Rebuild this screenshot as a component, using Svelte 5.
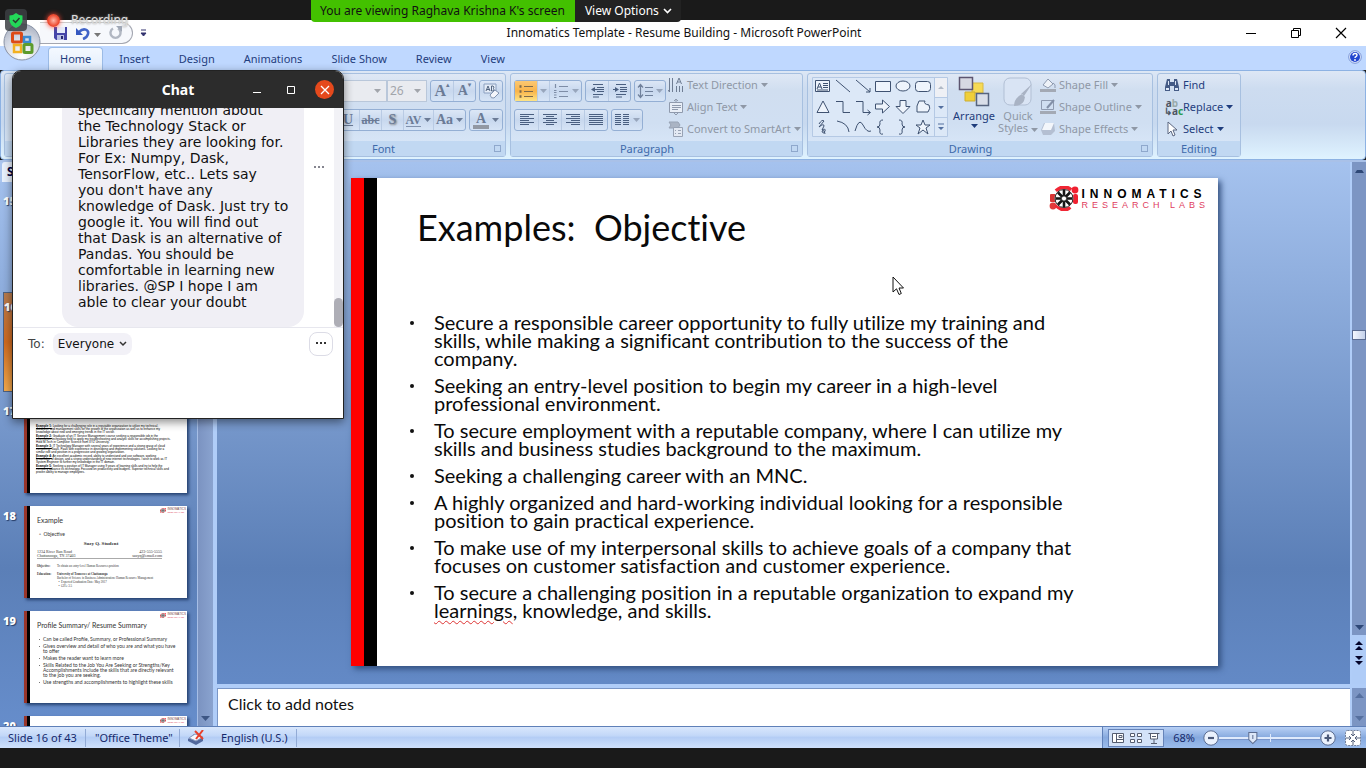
<script>
  const tabs = ['Home', 'Insert', 'Design', 'Animations', 'Slide Show', 'Review', 'View'];
  const bullets = [
    ['Secure a responsible career opportunity to fully utilize my training and', 'skills, while making a significant contribution to the success of the', 'company.'],
    ['Seeking an entry-level position to begin my career in a high-level', 'professional environment.'],
    ['To secure employment with a reputable company, where I can utilize my', 'skills and business studies background to the maximum.'],
    ['Seeking a challenging career with an MNC.'],
    ['A highly organized and hard-working individual looking for a responsible', 'position to gain practical experience.'],
    ['To make use of my interpersonal skills to achieve goals of a company that', 'focuses on customer satisfaction and customer experience.']
  ];
  const message = ['specifically mention about', 'the Technology Stack or', 'Libraries they are looking for.', 'For Ex: Numpy, Dask,', 'TensorFlow, etc.. Lets say', "you don't have any", 'knowledge of Dask. Just try to', 'google it. You will find out', 'that Dask is an alternative of', 'Pandas. You should be', 'comfortable in learning new', 'libraries. @SP I hope I am', 'able to clear your doubt'];
  const examples = [
    ['Example 1:', 'Looking for a challenging role in a reputable organization to utilize my technical, database, and management skills for the growth of the organization as well as to enhance my knowledge about new and emerging trends in the IT sector.'],
    ['Example 2:', 'Graduate of an IT Service Management course seeking a responsible job in the information technology field to apply my troubleshooting and analytic skills for accomplishing projects. Hold M.Tech in Computer Science from XYZ University.'],
    ['Example 3:', 'IT Technology Manager with several years of experience and a strong grasp of cloud computing, SaaS, PaaS with experience in developing and implementing solutions. Looking for a similar role and position in a progressive and growing organization.'],
    ['Example 4:', 'An excellent academic record, ability to understand and use software, working knowledge of design, and a strong understanding of new internet technologies. I wish to work as IT System Engineer to further my knowledge in the IT domain.'],
    ['Example 5:', 'Seeking a position of IT Manager using 9 years of learning skills and try to help the company advance its technology. Focused on productivity and budgets. Superior technical skills and proven ability to manage employees.']
  ];
</script>

{#snippet logo(small)}
  <div class="logo" class:small>
    <svg viewBox="0 0 30 25" aria-hidden="true">
      <rect x="1" y="8" width="6" height="8" rx="1" fill="#d93636" />
      <circle cx="4" cy="20" r="3.4" fill="#e23a3a" />
      <path d="M7 5Q15-2 22 4M7 19Q15 27 21 21" stroke="#f02735" stroke-width="4" fill="none" />
      <circle cx="26" cy="4" r="3.4" fill="#f02030" />
      <rect x="24" y="8" width="5" height="10" rx="2" fill="#f02030" />
      <circle cx="15" cy="12.500" r="9.500" fill="#fff" />
      <g stroke="#151515" stroke-width="2.600"><path d="M15 4v17M6.500 12.500h17M9 6.500l12 12M21 6.500l-12 12" /></g>
      <circle cx="15" cy="12.500" r="9" fill="none" stroke="#222" stroke-width="1" />
      <circle cx="15" cy="12.500" r="2.600" fill="#fff" stroke="#333" />
    </svg>
    <div class="logotext"><b>INNOMATICS</b><span>RESEARCH LABS</span></div>
  </div>
{/snippet}

{#snippet arrow()}<svg class="arr" viewBox="0 0 7 4" aria-hidden="true"><path d="M0 0h7L3.500 4z" fill="currentColor" /></svg>{/snippet}

{#snippet lines(kind)}
  <svg width="16" height="16" viewBox="0 0 16 16" aria-hidden="true" fill="none" stroke="#4a5f80" stroke-width="1.200">
    {#if kind === 'left'}<path d="M1 2.500h14M1 4.500h9M1 6.500h14M1 8.500h9M1 10.500h14M1 12.500h9" />
    {:else if kind === 'center'}<path d="M1 2.500h14M4 4.500h8M1 6.500h14M4 8.500h8M1 10.500h14M4 12.500h8" />
    {:else if kind === 'right'}<path d="M1 2.500h14M6 4.500h9M1 6.500h14M6 8.500h9M1 10.500h14M6 12.500h9" />
    {:else if kind === 'full'}<path d="M1 2.500h14M1 4.500h14M1 6.500h14M1 8.500h14M1 10.500h14M1 12.500h14" />
    {:else if kind === 'cols'}<path d="M1 2.500h6M1 4.500h6M1 6.500h6M1 8.500h6M1 10.500h6M1 12.500h6M9 2.500h6M9 4.500h6M9 6.500h6M9 8.500h6M9 10.500h6M9 12.500h6" />
    {:else if kind === 'bul'}<path d="M6 3.500h9M6 8.500h9M6 13.500h9" stroke="#7d6a4c" /><path d="M1.500 3.500h2M1.500 8.500h2M1.500 13.500h2" stroke-width="2.500" stroke="#7d6a4c" />
    {:else if kind === 'num'}<path d="M6 3.500h9M6 8.500h9M6 13.500h9M2.500 1v4M1 7.500h2.500M1 9.500h2.500M1 12h2.500M1 14.500h2.500" stroke="#7e8da6" />
    {:else if kind === 'out'}<path d="M4 1.500h10M8 4.500h7M8 6.500h7M8 8.500h7M4 11.500h10M4 14h6" /><path d="M6 4v2h2v1H6v2L2 6.500z" fill="#4a5f80" stroke="none" />
    {:else if kind === 'in'}<path d="M4 1.500h10M8 4.500h7M8 6.500h7M8 8.500h7M4 11.500h10M4 14h6" /><path d="M3 4v2H1v1h2v2l4-2.500z" fill="#4a5f80" stroke="none" />
    {:else}<path d="M8 4.500h8M8 8.500h8M8 12.500h8M3.500 2v12M1 4.500l2.500-3 2.500 3M1 11.500l2.500 3 2.500-3" stroke="#70819c" />{/if}
  </svg>
{/snippet}

<div class="screen">
  <div class="black"></div>

  <header class="titlebar">
    <div class="quick">
      <button aria-label="Save"><svg width="15" height="15" viewBox="0 0 15 15"><path d="M1 1h13v13H3l-2-2z" fill="#4545a8" /><path d="M4 1h8v6H4z" fill="#e6ecfb" /><path d="M4 9h7v5H4z" fill="#b9c0e4" /><path d="M8 10h2v3H8z" fill="#26266e" /></svg></button>
      <button aria-label="Undo"><svg width="14" height="13" viewBox="0 0 14 13"><path d="M3 5c5-5 10-2 9 2-.5 2-2 4-5 5" stroke="#4164c8" stroke-width="2.600" fill="none" /><path d="M0 1v7h7z" fill="#3558c0" /></svg></button>
      <span class="qa">{@render arrow()}</span>
      <button aria-label="Repeat"><svg width="14" height="14" viewBox="0 0 14 14"><path d="M9 2.500a5 5 0 1 1-5 0" stroke="#b1b7c2" stroke-width="2.400" fill="none" /><path d="M7 0h6v6z" fill="#9fa7b5" /></svg></button>
    </div>
    <button class="qmore" aria-label="Customize"><svg width="7" height="8" viewBox="0 0 7 8"><path d="M1 1h5M1 4h5L3.500 7z" stroke="#33336f" fill="#33336f" /></svg></button>
    <div class="title">Innomatics Template - Resume Building - Microsoft PowerPoint</div>
    <div class="winbtns">
      <button aria-label="Minimize"><svg width="12" height="12" viewBox="0 0 12 12"><path d="M1 6.500h10" stroke="#000" /></svg></button>
      <button aria-label="Restore"><svg width="12" height="12" viewBox="0 0 12 12" fill="none" stroke="#000"><path d="M1.500 3.500h7v7h-7zM3.500 3.500v-2h7v7h-2" /></svg></button>
      <button aria-label="Close"><svg width="12" height="12" viewBox="0 0 12 12"><path d="M1 1l10 10M11 1L1 11" stroke="#000" stroke-width="1.200" /></svg></button>
    </div>
  </header>

  <nav class="tabs">
    {#each tabs as t, i}<button class:active={i === 0}>{t}</button>{/each}
    <button class="help" aria-label="Help"><svg width="14" height="14" viewBox="0 0 14 14"><circle cx="7" cy="7" r="6.300" fill="#e8f0ff" stroke="#7a94d4" /><circle cx="7" cy="7" r="5" fill="#2447cf" /><path d="M5 5.500q0-2 2-2t2 1.600q0 1-1 1.500t-1 1.400" stroke="#fff" stroke-width="1.400" fill="none" /><circle cx="7" cy="10" r=".9" fill="#fff" /></svg></button>
  </nav>

  <section class="ribbon">
    <div class="group blank"><div class="foot"></div></div>
    <div class="group font">
      <div class="rows end">
        <div class="row">
          <div class="combo face">{@render arrow()}</div><div class="combo size">26 {@render arrow()}</div>
          <div class="set gap"><button class="serif big">A<sup>▴</sup></button><button class="serif">A<sup>▾</sup></button></div>
          <div class="set gap"><button aria-label="Clear Formatting"><svg width="18" height="18" viewBox="0 0 18 18"><path d="M2 2h12v9H2z" fill="#e3ebf7" stroke="#8ba0c0" /><path d="M4 9l2-5 2 5M5 7.500h3M9.500 4v5h2q1-1 0-2.500 1-1.500-.5-2.500z" stroke="#52647f" fill="none" /><path d="M8 13l5-5 4 3-5 5q-3 1-4-3z" fill="#f4f6fb" stroke="#8193b0" /></svg></button></div>
        </div>
        <div class="row">
          <div class="set"><button class="serif und">U</button><button class="serif strike">abc</button><button class="serif shade">S</button><button class="serif av"><span>AV</span>{@render arrow()}</button><button class="serif wide">Aa{@render arrow()}</button></div>
          <div class="set gap"><button class="serif wide"><span class="acol">A</span>{@render arrow()}</button></div>
        </div>
      </div>
      <div class="foot"><span>Font</span><i class="launch"></i></div>
    </div>

    <div class="group para">
      <div class="cols">
        <div class="rows">
          <div class="row">
            <div class="set"><button class="hot" aria-label="Bullets">{@render lines('bul')}</button><button class="tiny" aria-label="Bullet styles">{@render arrow()}</button><button class="wide" aria-label="Numbering">{@render lines('num')}{@render arrow()}</button></div>
            <div class="set gap"><button aria-label="Decrease indent">{@render lines('out')}</button><button aria-label="Increase indent">{@render lines('in')}</button></div>
            <div class="set gap"><button class="spc" aria-label="Line spacing">{@render lines('sp')}{@render arrow()}</button></div>
          </div>
          <div class="row">
            <div class="set four"><button aria-label="Left">{@render lines('left')}</button><button aria-label="Center">{@render lines('center')}</button><button aria-label="Right">{@render lines('right')}</button><button aria-label="Justify">{@render lines('full')}</button></div>
            <div class="set gap"><button class="spc" aria-label="Columns">{@render lines('cols')}{@render arrow()}</button></div>
          </div>
        </div>
        <div class="cmds dim">
          <button><svg width="16" height="16" viewBox="0 0 16 16" stroke="#6f7d93" fill="none"><path d="M1.500 1v14M4.500 1v14M8.500 9v6M11.500 9v6M14.500 9v6M0 13l1.500 2M8.500 7l2.500-6 2.500 6M9.500 5h3" /></svg>Text Direction {@render arrow()}</button>
          <button><svg width="16" height="16" viewBox="0 0 16 16" stroke="#8f9aad" fill="none"><path d="M1.500 3.500h13v10h-13z" fill="#e8eef7" /><path d="M4 6.500h9M4 8.500h9M4 10.500h6M8 0v4M6 2l2-2 2 2M6 14l2 2 2-2" /></svg>Align Text {@render arrow()}</button>
          <button><svg width="16" height="16" viewBox="0 0 16 16" stroke="#98a3b5"><path d="M1 1h9l2 3-2 3H1l2-3z" fill="#aab4c4" /><path d="M5.500 6.500h9v9h-9z" fill="#e3e9f3" /><path d="M7 9.500h1M10 9.500h3M7 12.500h1M10 12.500h3" /></svg>Convert to SmartArt {@render arrow()}</button>
        </div>
      </div>
      <div class="foot"><span>Paragraph</span><i class="launch"></i></div>
    </div>

    <div class="group draw">
      <div class="cols">
        <svg class="gallery" width="136" height="60" viewBox="0 0 136 60" fill="#eef4fc" stroke="#3f5271" aria-label="Shapes">
          <path d="M.500.500h135v59H.500z" fill="#dce8f7" stroke="#b5c9e4" />
          <path d="M3.500 3.500h14v11h-14z" /><path d="M5 12l2.500-6L10 12M6 10h3M11 6.500h5M11 8.500h5M11 10.500h5M5 13h11" fill="none" />
          <path d="M24 3l14 12M44 3l14 12M58 11v4h-4" fill="none" />
          <path d="M63.500 4.500h15v10h-15z" /><ellipse cx="91" cy="9" rx="7" ry="5" /><rect x="103.500" y="4.500" width="15" height="10" rx="3" />
          <path d="M5 35.500h12L11 24z" /><path d="M24 24.500h7v11h7M44 24.500h7v11h7M55.500 33l3 2.500-3 2.500" fill="none" />
          <path d="M63.500 27h7v-4l7 6.500-7 6.500v-4h-7zM88 23.500h6v6h4l-7 7-7-7h4zM105 29l2-5h6q-2 3 4 4 2 3-1 7h-11z" />
          <g fill="none"><path d="M7 47q3-5 5-3l-5 6q5-4 5-1l-2 4q4-2 3 1-2 4-3 0 2-2 3 3M25 44q11 2 12 11M43 54q4-14 8-6t8 6M71 43q-4 0-3 4 0 3-3 3 3 0 3 3-1 5 3 4M87 43q4 0 3 4 0 3 3 3-3 0-3 3 1 5-3 4" /></g>
          <path d="M111 43l2 5h5l-4 3 2 6-5-4-5 4 2-6-4-3h5z" />
          <path d="M122.500 1v58M122.500 20.500h13M122.500 40.500h13" stroke="#b5c9e4" /><path d="M123 1h12v19h-12z" fill="#eef0f5" stroke="none" />
          <path d="M126 12h6l-3-3z" fill="#b0b9c6" stroke="none" /><path d="M126 29h6l-3 3zM126 50h6l-3 3zM126 46.500h6v1h-6z" fill="#5470a0" stroke="none" />
        </svg>
        <button class="bigbtn"><svg width="32" height="32" viewBox="0 0 32 32"><path d="M14 7h11v10H14z" fill="#f6da55" stroke="#d8b942" /><path d="M7 16h10v9H7z" fill="#f0cf39" stroke="#cdae32" /><path d="M1.500 1.500h13v12h-13z" fill="#d7d8e2" stroke="#5c5570" stroke-width="1.500" /><path d="M18.500 17.500h12v12h-12z" fill="#d9dee9" stroke="#56647f" stroke-width="1.500" /></svg><span>Arrange</span>{@render arrow()}</button>
        <button class="bigbtn dim"><svg width="32" height="32" viewBox="0 0 32 32"><rect x="2" y="2" width="27" height="27" rx="6" fill="#d9e4f4" stroke="#b1bfd4" /><path d="M30 8l-8 12-3-2zM20 18q-8 4-8 12 10 0 11-9z" fill="#a9b3c4" /></svg><span>Quick<br />Styles {@render arrow()}</span></button>
        <div class="cmds dim">
          <button><svg width="16" height="16" viewBox="0 0 16 16"><path d="M3 8l5-6 5 5-5 4z" fill="#eef2f8" stroke="#8f9bb0" /><path d="M13 6q3 1 2 5" stroke="#8f9bb0" fill="none" /><path d="M0 12h16v3H0z" fill="#a3a9b4" /></svg>Shape Fill {@render arrow()}</button>
          <button><svg width="16" height="16" viewBox="0 0 16 16"><path d="M1.500 1.500h12v9h-12z" fill="none" stroke="#8f9bb0" /><path d="M7 9l7-8" stroke="#8390a8" stroke-width="2" /><path d="M0 12h16v3H0z" fill="#a3a9b4" /></svg>Shape Outline {@render arrow()}</button>
          <button><svg width="16" height="16" viewBox="0 0 16 16"><path d="M4 2h10l1 8-4 4H3L1 9z" fill="#b4bfd2" /><path d="M5 2h9l-3 7H2z" fill="#f3f6fb" /></svg>Shape Effects {@render arrow()}</button>
        </div>
      </div>
      <div class="foot"><span>Drawing</span><i class="launch"></i></div>
    </div>

    <div class="group edit">
      <div class="cmds">
        <button><svg width="16" height="16" viewBox="0 0 16 16"><path d="M3 2h3v3h4V2h3l2 8v4h-5V9H6v5H1v-4z" fill="#465c86" /><path d="M2 11h3v2H2zM11 11h3v2h-3zM4 4h1v4H4zM11 4h1v4h-1z" fill="#dfe8f7" /></svg>Find</button>
        <button><span class="abac"><b>a<i>b</i></b><b>↳a<u>c</u></b></span>Replace {@render arrow()}</button>
        <button><svg width="16" height="16" viewBox="0 0 16 16"><path d="M4 1v12l3-3 2 5 2-1-2-5h4z" fill="#fff" stroke="#5b6680" /></svg>Select {@render arrow()}</button>
      </div>
      <div class="foot"><span>Editing</span></div>
    </div>
  </section>

  <main class="work">
    <aside class="pane">
      <div class="panetabs"><span>Slides</span></div>
      <div class="panebody">
        <ol class="thumbs">
          <li><b>15</b><div class="thumb"></div></li>
          <li class="sel"><b>16</b><div class="thumb"></div></li>
          <li><b>17</b><div class="thumb ex"><div>{#each examples as e}<p><u>{e[0]}</u> {e[1]}</p>{/each}</div></div></li>
          <li><b>18</b><div class="thumb resume">{@render logo(true)}
            <h4>Example</h4><p class="ob">◦ &nbsp;Objective</p>
            <h5>Suzy Q. Student</h5>
            <div class="addr"><span>1234 River Run Road<br />Chattanooga, TN 37403</span><span>423-555-5555<br />suzyq@email.com</span></div>
            <dl><dt>Objective:</dt><dd>To obtain an entry-level Human Resources position</dd><dt>Education:</dt><dd><b>University of Tennessee at Chattanooga</b><br />Bachelor of Science in Business Administration: Human Resource Management<br />&nbsp; • &nbsp;Expected Graduation Date: May 2017<br />&nbsp; • &nbsp;GPA: 3.5</dd></dl>
          </div></li>
          <li><b>19</b><div class="thumb profile">{@render logo(true)}
            <h4>Profile Summary/ Resume Summary</h4>
            <ul><li>Can be called Profile, Summary, or Professional Summary</li><li>Gives overview and detail of who you are and what you have to offer</li><li>Makes the reader want to learn more</li><li>Skills Related to the Job You Are Seeking or Strengths/Key Accomplishments include the skills that are directly relevant to the job you are seeking.</li><li>Use strengths and accomplishments to highlight these skills</li></ul>
          </div></li>
          <li><b>20</b><div class="thumb">{@render logo(true)}</div></li>
        </ol>
        <div class="bar"><svg width="9" height="5" viewBox="0 0 9 5" aria-hidden="true"><path d="M0 0h9L4.500 5z" fill="#3d5684" /></svg></div>
      </div>
    </aside>
    <div class="right">
      <div class="stage">
        <div class="canvas">
          <article class="slide">
            <div class="head"><h1>Examples:&nbsp; Objective</h1>{@render logo(false)}</div>
            <ul class="bul">
              {#each bullets as b}<li>{#each b as l}<span>{l}</span>{/each}</li>{/each}
              <li><span>To secure a challenging position in a reputable organization to expand my</span><span><em>learnings</em>, knowledge, and skills.</span></li>
            </ul>
          </article>
        </div>
        <div class="vscroll">
          <div class="track">
            <svg width="9" height="4" viewBox="0 0 9 4"><path d="M0 4h9L7 1H2z" fill="#2e4877" /></svg>
            <i></i>
            <svg width="9" height="5" viewBox="0 0 9 5"><path d="M0 0h9L4.500 5z" fill="#2e4877" /></svg>
          </div>
          <div class="jump"><svg width="8" height="10" viewBox="0 0 8 10"><path d="M0 4h8L4 0zM0 9h8L4 5z" fill="#05052a" /></svg><svg width="8" height="10" viewBox="0 0 8 10"><path d="M0 0h8L4 4zM0 5h8L4 9z" fill="#05052a" /></svg></div>
        </div>
      </div>
      <div class="notes"><p>Click to add notes</p><div class="nbar"><svg width="9" height="5" viewBox="0 0 9 5"><path d="M0 5h9L4.500 0z" fill="#56709f" /></svg><svg width="9" height="5" viewBox="0 0 9 5"><path d="M0 0h9L4.500 5z" fill="#56709f" /></svg></div></div>
    </div>
  </main>

  <footer class="status">
    <span class="s1">Slide 16 of 43</span><span class="s2">"Office Theme"</span>
    <span class="s3"><svg width="17" height="15" viewBox="0 0 17 15"><path d="M0 9l6-5 9 3v4l-7 4-8-4z" fill="#51689d" /><path d="M1 8l6-4 8 3-7 4z" fill="#f5f7fc" stroke="#8b9cc2" /><path d="M7 1l8 8M15 0L8 9" stroke="#e8402a" stroke-width="2" /></svg></span>
    <span class="s4">English (U.S.)</span>
    <div class="viewctl">
      <div class="views">
        <button aria-label="Normal"><svg width="12" height="12" viewBox="0 0 12 12" fill="#fff" stroke="#555d70"><path d="M.500 1.500h11v9H.500zM4.500 1.500v9M4.500 7.500h7M7 3.500h3v2H7z" /></svg></button>
        <button aria-label="Slide Sorter"><svg width="12" height="12" viewBox="0 0 12 12" fill="#fff" stroke="#555d70"><path d="M.500 1.500h4v3h-4zM7.500 1.500h4v3h-4zM.500 7.500h4v3h-4zM7.500 7.500h4v3h-4z" /></svg></button>
        <button aria-label="Slide Show"><svg width="12" height="12" viewBox="0 0 12 12" fill="#fff" stroke="#555d70"><path d="M.500 1.500h11M2.500 2v5h7V2M6 7v4M3 11.500h6M4 4.500h4" /></svg></button>
      </div>
      <span>68%</span>
      <button class="z" aria-label="Zoom out"><svg width="16" height="16" viewBox="0 0 16 16"><circle cx="8" cy="8" r="7.200" fill="#eaf1fd" stroke="#5b6c90" /><path d="M5 8h6" stroke="#4a5878" stroke-width="2.200" /></svg></button>
      <svg class="zline" viewBox="0 0 100 16" preserveAspectRatio="none"><path d="M0 8h100" stroke="#dfeafc" stroke-width="2" /><path d="M0 9.500h100" stroke="#7a96cb" /><path d="M51 4v8" stroke="#dfeafc" /><path d="M29.500 2.500h8v7l-4 4-4-4z" fill="#dde7f8" stroke="#5b6c90" /><path d="M33.500 5v4" stroke="#5b6c90" /></svg>
      <button class="z" aria-label="Zoom in"><svg width="16" height="16" viewBox="0 0 16 16"><circle cx="8" cy="8" r="7.200" fill="#eaf1fd" stroke="#5b6c90" /><path d="M4.500 8h7M8 4.500v7" stroke="#4a5878" stroke-width="2.200" /></svg></button>
      <button class="z fit" aria-label="Fit"><svg width="16" height="16" viewBox="0 0 16 16"><rect x=".5" y=".5" width="15" height="15" rx="2" fill="#fff" stroke="#74819b" stroke-dasharray="2 1" /><path d="M8 1v5M8 10v5M1 8h5M10 8h5M6 4l2 2 2-2M6 12l2-2 2 2M4 6l2 2-2 2M12 6l-2 2 2 2" stroke="#56627c" fill="none" /></svg></button>
    </div>
  </footer>
  <div class="black"></div>

  <button class="orb" aria-label="Office">
    <svg width="40" height="40" viewBox="0 0 40 40"><defs><radialGradient id="orbg" cx=".5" cy=".9" r=".9"><stop offset="0" stop-color="#fff" /><stop offset=".6" stop-color="#d4d9e4" /><stop offset="1" stop-color="#aab1c0" /></radialGradient></defs><circle cx="20" cy="20" r="18" fill="url(#orbg)" stroke="#8a93a6" /><g fill="none" stroke-width="3"><rect x="10.500" y="11" width="9" height="9" rx="1" stroke="#dd4a16" /><rect x="22" y="15" width="6" height="5" stroke="#3c8ad0" stroke-width="2.500" /><rect x="12" y="23" width="7" height="7" stroke="#f2b021" stroke-width="2.500" /><rect x="22" y="22.500" width="8" height="8" rx="1" stroke="#5d9b2c" /></g></svg>
  </button>
  <div class="shield"><svg width="14" height="15" viewBox="0 0 14 15"><path d="M7 0q3 2.500 6.500 2.500V7q0 5-6.500 8Q.5 12 .5 7V2.500Q4 2.500 7 0z" fill="#23d959" /><path d="M4 7l2.500 2.500L10.500 5" stroke="#2b3b30" stroke-width="1.500" fill="none" /></svg></div>
  <div class="rec"><i></i><span>Recording</span></div>
  <div class="share"><span>You are viewing Raghava Krishna K's screen</span><button>View Options <svg width="9" height="6" viewBox="0 0 9 6"><path d="M1 1l3.500 3.500L8 1" stroke="#fff" stroke-width="1.600" fill="none" /></svg></button></div>

  <svg class="cursor" width="12" height="20" viewBox="0 0 12 20" aria-hidden="true"><path d="M1 1v15l3.500-3.200L7 18.500l2.300-1L7 12h4.500z" fill="#fff" stroke="#111" /></svg>

  <section class="chat">
    <header><h2>Chat</h2><div>
      <button aria-label="Minimize chat"><svg width="10" height="10" viewBox="0 0 10 10"><path d="M1 7.500h8" stroke="#fff" /></svg></button>
      <button aria-label="Maximize chat"><svg width="10" height="10" viewBox="0 0 10 10"><path d="M1.500 1.500h7v7h-7z" stroke="#fff" fill="none" /></svg></button>
      <button class="x" aria-label="Close chat"><svg width="10" height="10" viewBox="0 0 10 10"><path d="M1 1l8 8M9 1L1 9" stroke="#fff" stroke-width="1.300" /></svg></button>
    </div></header>
    <div class="msgs">
      <div class="bubble">{#each message as l}<span>{l}</span>{/each}</div>
      <button class="dots" aria-label="More"><svg width="11" height="3" viewBox="0 0 11 3"><path d="M0 0h2v2H0zM4 0h2v2H4zM8 0h2v2H8z" fill="#85858f" /></svg></button>
      <div class="cbar"><i></i></div>
    </div>
    <div class="to"><span>To:</span><button class="who">Everyone <svg width="8" height="6" viewBox="0 0 8 6"><path d="M1 1l3 3 3-3" stroke="#333" stroke-width="1.500" fill="none" /></svg></button><button class="opt" aria-label="Options"><svg width="11" height="3" viewBox="0 0 11 3"><path d="M0 0h2v2H0zM4 0h2v2H4zM8 0h2v2H8z" fill="#333" /></svg></button></div>
    <textarea aria-label="Message"></textarea>
  </section>
</div>

<style>
  :global(body) { background: #1a1a1a; }
  * { box-sizing: border-box; }
  button { font: inherit; color: inherit; background: none; border: 0; padding: 0; margin: 0; display: flex; align-items: center; justify-content: center; white-space: nowrap; }
  svg { display: block; flex: none; }
  p, h1, h2, h4, h5, ul, ol, dl, dd { margin: 0; padding: 0; }
  .screen { position: relative; display: flex; flex-direction: column; height: 100vh; overflow: hidden; font: 11px/16px "Noto Sans", sans-serif; color: #1e3c7b; }
  .black { height: 20px; flex: none; background: #1a1a1a; }
  .titlebar { display: flex; align-items: center; height: 26px; flex: none; background: #fff; padding-left: 40px; }
  .quick { display: flex; align-items: center; gap: 8px; height: 22px; width: 93px; padding-left: 13px; border: 1px solid #a3a6b0; border-left: 0; border-top-color: #ccc; border-radius: 0 11px 11px 0; background: #f6f8fc; }
  .qa { color: #777; margin: 0 0 0 -4px; }
  .qmore { margin-left: 7px; }
  .title { flex: 1; text-align: center; color: #111; padding: 0 24px 0 0; white-space: nowrap; font-size: 12px; }
  .winbtns { display: flex; padding-right: 19px; gap: 33px; }
  .arr { width: 7px; height: 4px; display: inline-block; }
  .tabs { display: flex; height: 24px; flex: none; background: #bfd8ff; padding: 1px 4px 0 48px; }
  .tabs button { padding: 0 13px; margin-right: 3px; color: #1f3d7d; border-radius: 4px 4px 0 0; height: 23px; }
  .tabs .active { padding: 0 11px; background: linear-gradient(#f4f9ff, #e3edfb); border: 1px solid #9bbbe6; border-bottom: 0; }
  .tabs .help { margin: 0 0 0 auto; padding: 0; height: 20px; }
  .ribbon { display: flex; gap: 4px; height: 90px; flex: none; padding: 2px 4px 2px 3px; border: 1px solid #8db2e3; border-radius: 4px; background: linear-gradient(#dde7f5, #cddcf0 20%, #c8d9ef 60%, #dff3ff); }
  .group { display: flex; flex-direction: column; border: 1px solid #a7c0e0; border-radius: 3px; background: linear-gradient(#dfe8f5, #d0def0 20%, #d0dff2 60%, #dbe9fa); }
  .blank { width: 272px; }
  .font { width: 226px; }
  .para { width: 293px; }
  .draw { width: 346px; }
  .edit { width: 84px; }
  .foot { margin-top: auto; height: 15px; flex: none; display: flex; justify-content: center; align-items: center; background: #c1d8f2; color: #3e6aaa; position: relative; }
  .font .foot, .para .foot, .draw .foot { padding-right: 19px; }
  .launch { position: absolute; right: 4px; top: 4px; width: 7px; height: 7px; border: 1px solid #8fa8cc; }
  .rows { display: flex; flex-direction: column; gap: 7px; padding: 6px 0 0 3px; }
  .rows .row { display: flex; }
  .rows.end .row { justify-content: flex-end; }
  .rows.end { padding-right: 2px; }
  .set { display: flex; height: 22px; border: 1px solid #94afd4; border-radius: 3px; background: linear-gradient(#dce7f6, #c8d8ee 50%, #d6e4f6); }
  .gap { margin-left: 3px; }
  .set button { width: 22px; gap: 3px; color: #98a6bc; }
  .set button + button { border-left: 1px solid #b9cbe4; }
  .set .tiny { width: 12px; }
  .set .wide { width: 32px; }
  .set .spc { width: 30px; }
  .four button { width: 23px; }
  .set .av { width: 30px; }
  .set .av span { font-size: 12px; border-bottom: 1px solid #8091ad; line-height: 12px; }
  .hot { background: linear-gradient(#fbc873, #f9b44a 50%, #fde486); }
  .set .serif { font: bold 14px "Liberation Serif", serif; color: #6b7b96; }
  .serif.big { font-size: 16px; }
  .set button:has(sup) { gap: 0; }
  .serif sup { font: 7px/8px "DejaVu Sans", sans-serif; align-self: flex-start; }
  .und { text-decoration: underline; }
  .strike { text-decoration: line-through; }
  .set .strike { font-size: 12px; }
  .shade { text-shadow: 1px 1px 2px #777; }
  .acol { border-bottom: 4px solid #9298a3; line-height: 13px; padding: 0 3px; }
  .combo { height: 22px; border: 1px solid #b9c7da; background: #e9ebf0; color: #a2a5ab; font-size: 12px; display: flex; align-items: center; justify-content: space-between; padding: 0 5px 0 2px; }
  .face { width: 88px; justify-content: flex-end; }
  .size { width: 40px; }
  .cols { display: flex; }
  .cmds { display: flex; flex-direction: column; color: #1f3d7d; }
  .cmds button { height: 22px; gap: 3px; justify-content: flex-start; }
  .para .cmds { padding-left: 2px; }
  .cmds.dim, .dim { color: #8f98a6; }
  .gallery { margin: 3px 0 0 4px; }
  .bigbtn { flex-direction: column; justify-content: flex-start; width: 44px; padding-top: 2px; line-height: 12px; gap: 2px; margin-left: 4px; }
  .bigbtn.dim { margin: 0; }
  .edit .cmds { padding-left: 6px; }
  .abac { width: 16px; display: flex; flex-direction: column; line-height: 8px; font-size: 10px; color: #4d5563; }
  .abac i { font-style: normal; color: #9aa; }
  .abac u { text-decoration: none; color: #2b9b50; }
  .work { flex: 1; min-height: 0; display: flex; background: linear-gradient(#a5c2ee, #5b7fb7 72%, #668dcb); border-top: 2px solid #a9c1e8; }
  .pane { width: 217px; flex: none; display: flex; flex-direction: column; border-right: 4px solid #b0cdf8; }
  .panetabs { height: 20px; flex: none; background: #a9c4ee; padding-left: 2px; }
  .panetabs span { display: block; width: 60px; height: 20px; padding: 2px 5px; background: #e9f1fd; border-radius: 3px 3px 0 0; color: #000040; font-weight: bold; font-size: 12px; }
  .panebody { flex: 1; min-height: 0; display: flex; }
  .thumbs { flex: 1; overflow: hidden; list-style: none; display: flex; flex-direction: column; gap: 5px; padding: 5px 5px 0 3px; }
  .thumbs > li { flex: none; display: flex; height: 100px; padding: 4px 5px 4px 0; font: bold 11px/20px "Noto Sans", sans-serif; color: #fff; }
  .thumbs > li > b { width: 21px; text-shadow: 1px 1px 1px #263c66; }
  .thumbs .sel { background: linear-gradient(#b57a4e, #cf6a20 50%, #f3a94c); border: 1px solid #4e6282; }
  .thumb { position: relative; flex: 1; min-width: 0; height: 92px; background: #fff; border-left: 3px solid #98352b; box-shadow: inset 3px 0 #000, 2px 2px 3px #25406f; color: #333; overflow: hidden; font: 5px/5px Lato, sans-serif; padding-left: 10px; }
  .ex { padding: 24px 16px 0 9px; color: #000; font: 3px/3px "Liberation Sans", sans-serif; }
  .ex p { margin-bottom: 1px; }
  .ex u { font-weight: bold; }
  .thumb h4 { font: 7px/9px Lato, sans-serif; padding-top: 10px; }
  .ob { padding: 7px 0 3px 2px; }
  .thumb h5 { font: bold 5px/6px "Liberation Serif", serif; text-align: center; padding-right: 22px; margin-top: 1px; }
  .addr { font: 4px/4px "Liberation Serif", serif; display: flex; justify-content: space-between; margin: 3px 25px 5px 0; border-bottom: 1px solid #aaa; }
  .addr span + span { text-align: right; }
  .thumb dl { display: grid; grid-template-columns: 20px 1fr; row-gap: 4px; font: 3px/4px "Liberation Serif", serif; white-space: nowrap; }
  .thumb dt { font-weight: bold; }
  .profile ul { margin-top: 7px; padding: 0 10px 0 6px; list-style: none; }
  .profile li { margin-bottom: 2px; position: relative; }
  .profile li::before { content: ""; position: absolute; left: -4px; top: 2px; width: 1px; height: 1px; background: #777; }
  .bar { width: 16px; background: linear-gradient(90deg, #7b93c1, #8aa3cf); border-left: 1px solid #a6bee6; display: flex; align-items: flex-end; justify-content: center; padding-bottom: 5px; }
  .right { flex: 1; min-width: 0; display: flex; flex-direction: column; }
  .stage { flex: 1; min-height: 0; display: flex; }
  .canvas { flex: 1; display: flex; padding: 16px 132px 18px 134px; }
  .slide { flex: 1; background: #fff; border-left: 13px solid #f00; box-shadow: inset 13px 0 #000, 3px 3px 6px #33507f; color: #0a0a0a; font: 20px/18px Lato, sans-serif; font-variant-ligatures: none; padding: 8px 9px 0 52px; }
  .head { display: flex; justify-content: space-between; }
  .slide h1 { font: 36px/42px Lato, sans-serif; font-variant-ligatures: none; padding: 20px 0 0 1px; white-space: nowrap; }
  .logo { display: flex; gap: 2px; height: 25px; align-items: center; }
  .logo svg { width: 30px; height: 25px; }
  .logotext { display: flex; flex-direction: column; font: 9px/10px "Liberation Sans", sans-serif; color: #e0405e; letter-spacing: 4px; white-space: nowrap; }
  .logotext b { font-size: 12px; line-height: 12px; color: #000; letter-spacing: 5px; }
  .logo.small { position: absolute; right: 1px; top: 2px; height: 5px; gap: 1px; }
  .small svg { width: 6px; height: 5px; }
  .small .logotext { font-size: 2px; line-height: 2px; letter-spacing: 0; }
  .small .logotext b { font-size: 3px; line-height: 3px; font-weight: normal; letter-spacing: 0; color: #744; }
  .bul { list-style: none; display: flex; flex-direction: column; gap: 9px; padding-top: 65px; }
  .bul li { position: relative; padding-left: 18px; }
  .bul li::before { content: ""; position: absolute; left: -6px; top: 8px; width: 4px; height: 4px; border-radius: 2px; background: #111; }
  .bul span { display: block; white-space: nowrap; }
  .bul em { font-style: normal; text-decoration: underline wavy #d33 1px; text-underline-offset: 2px; }
  .vscroll { width: 16px; display: flex; flex-direction: column; border-left: 2px solid #b0cdf8; }
  .track { flex: 1; display: flex; flex-direction: column; align-items: center; justify-content: space-between; background: #7c95c3; padding: 7px 0 5px; position: relative; }
  .track i { position: absolute; top: 168px; left: 0; right: 0; height: 10px; border: 1px solid #5b6c90; background: linear-gradient(90deg, #f4f7fd, #c4d1ea); }
  .jump { height: 49px; background: #afccf7; display: flex; flex-direction: column; align-items: center; padding-top: 6px; gap: 5px; }
  .notes { height: 42px; flex: none; display: flex; border-top: 4px solid #b0cdf8; background: #fff; }
  .notes p { flex: 1; color: #111; font: 16px/20px Lato, sans-serif; padding: 5px 10px; border-top: 1px solid #7a96c6; border-left: 1px solid #7a96c6; }
  .nbar { width: 16px; background: #7c95c3; border-left: 2px solid #b0cdf8; display: flex; flex-direction: column; align-items: center; justify-content: space-between; padding: 5px 0; }
  .status { height: 22px; flex: none; display: flex; align-items: center; background: linear-gradient(#d9e7fc, #c3d8f8 40%, #b4cdf5 50%, #cfe1fc); border-top: 1px solid #5f80b8; color: #15286b; }
  .status > span { height: 18px; display: flex; align-items: center; border-right: 1px solid #92abd6; white-space: nowrap; }
  .s1 { width: 86px; padding-left: 8px; }
  .s2 { width: 94px; padding-left: 9px; }
  .status > .s3 { width: 33px; padding-left: 8px; border: 0; }
  .s4 { width: 84px; padding-left: 8px; }
  .viewctl { margin-left: auto; height: 21px; display: flex; align-items: center; background: linear-gradient(#b8d0f5, #86a9de 50%, #9bbcec); border-left: 1px solid #5f80b8; padding: 0 5px; }
  .views { display: flex; border: 1px solid #6684b9; background: #d3e2f8; margin-right: 9px; }
  .views button { width: 18px; height: 16px; }
  .z { margin-left: 8px; }
  .zline { width: 101px; height: 16px; margin-right: -8px; }
  .fit { margin-left: 9px; }
  .orb { position: absolute; left: 2px; top: 22px; }
  .shield { position: absolute; left: 5px; top: 9px; width: 22px; height: 22px; border-radius: 4px; background: #3c4043d9; display: flex; align-items: center; justify-content: center; }
  .rec { position: absolute; left: 47px; top: 12px; display: flex; align-items: center; gap: 11px; color: #ddd; font-size: 12px; height: 16px; text-shadow: 0 0 2px #999; }
  .rec i { width: 13px; height: 13px; border-radius: 7px; background: radial-gradient(#ffb7a8, #ed4a30 60%); box-shadow: 0 0 5px #f43; }
  .share { position: absolute; left: 311px; top: 0; display: flex; height: 22px; line-height: 22px; font-size: 12px; border-radius: 0 0 4px 4px; overflow: hidden; white-space: nowrap; }
  .share span { background: #43c100; color: #111; padding: 0 10px 0 9px; }
  .share button { background: #222; color: #fff; padding: 0 9px 0 10px; gap: 4px; }
  .cursor { position: absolute; left: 892px; top: 276px; }
  .chat { position: absolute; left: 12px; top: 70px; width: 332px; height: 349px; border: 1px solid #222; border-radius: 9px 9px 0 0; background: #fff; box-shadow: 0 3px 10px #0007; display: flex; flex-direction: column; overflow: hidden; color: #111; font: 14px/16px "DejaVu Sans", sans-serif; }
  .chat header { height: 37px; flex: none; background: #2c2c2c; color: #fff; display: flex; align-items: center; position: relative; justify-content: center; }
  .chat h2 { font: bold 14px/20px "Noto Sans", sans-serif; }
  .chat header div { position: absolute; right: 9px; display: flex; gap: 15px; }
  .chat header button { width: 19px; height: 19px; }
  .chat header .x { background: #e5491c; border-radius: 10px; }
  .msgs { height: 220px; flex: none; display: flex; align-items: flex-end; overflow: hidden; position: relative; border-bottom: 1px solid #e7e7ee; padding-left: 49px; }
  .bubble { background: #f0eff5; width: 242px; padding: 0 16px 17px; border-radius: 0 0 16px 16px; }
  .bubble span { display: block; white-space: nowrap; }
  .dots { margin: 0 0 158px 10px; }
  .cbar { position: absolute; right: 0; top: 0; bottom: 0; width: 9px; background: #f2f2f6; display: flex; align-items: flex-end; }
  .cbar i { width: 9px; height: 29px; border-radius: 5px; background: #aeaeb6; }
  .to { display: flex; align-items: center; height: 31px; flex: none; padding: 0 10px 0 15px; font: 12px/16px "DejaVu Sans", sans-serif; color: #444; }
  .who { background: #f2f1f7; border-radius: 8px; height: 22px; padding: 0 5px; margin-left: 8px; gap: 5px; color: #111; }
  .opt { margin-left: auto; width: 24px; height: 24px; border: 1px solid #dcdce6; border-radius: 8px; }
  textarea { flex: 1; border: 0; resize: none; background: #fff; }
</style>
